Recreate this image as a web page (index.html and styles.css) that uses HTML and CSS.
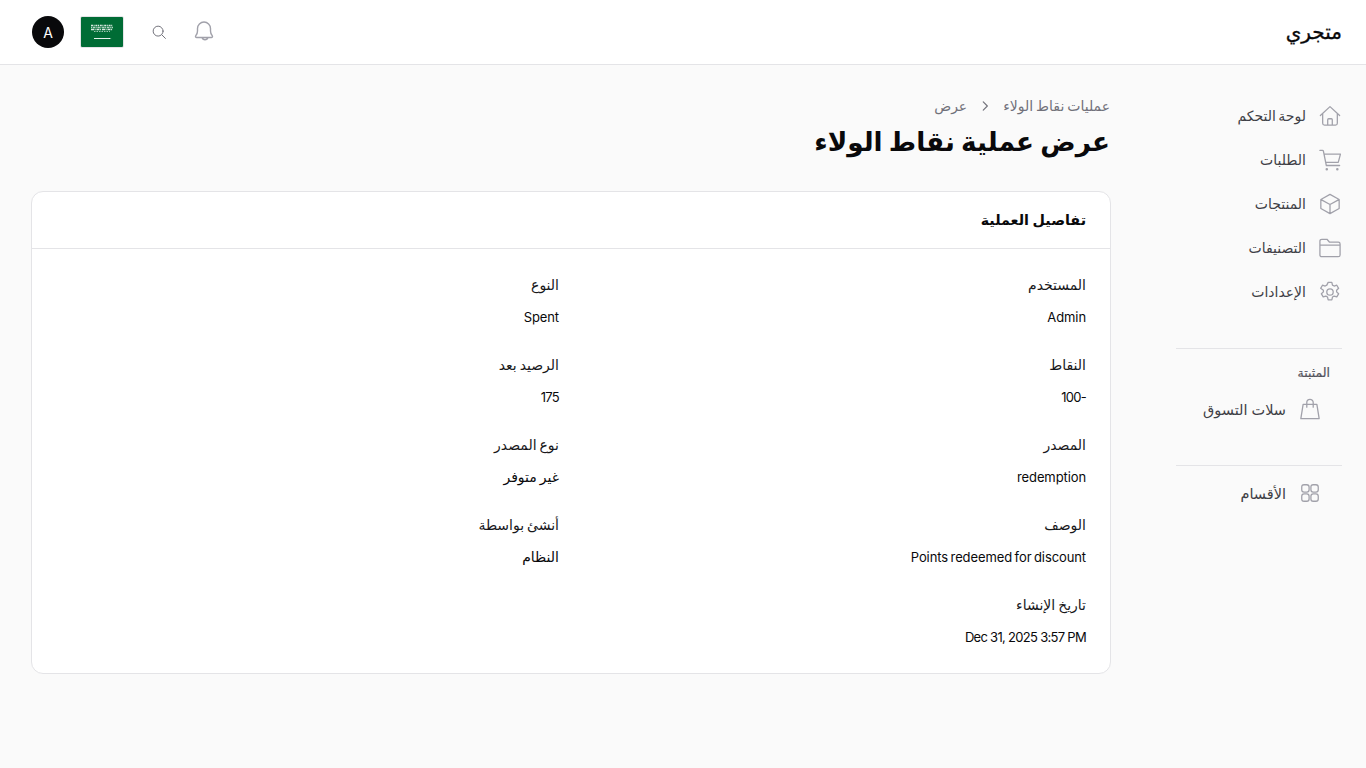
FILE: index.html
```html
<!DOCTYPE html>
<html lang="ar" dir="rtl">
<head>
    <meta charset="UTF-8">
    <title>عرض عملية نقاط الولاء</title>
    <link rel="stylesheet" href="styles.css">
</head>
<body>
    <header class="topbar">
        <div class="logo">متجري</div>
        <div class="top-actions">
            <svg class="bell" viewBox="0 0 24 24" fill="none" stroke="currentColor" stroke-width="1.4" stroke-linecap="round" stroke-linejoin="round"><path d="M14.900 17.500a3 3 0 0 1-5.800 0M5.600 17.500h12.800c.9 0 1.400-1 .9-1.700-.8-1-1.800-2.100-1.800-4.800V8.500a6.500 6.500 0 0 0-13 0V11c0 2.700-1 3.800-1.800 4.800-.5.7 0 1.700.9 1.700z"/></svg>
            <svg class="search" viewBox="0 0 24 24" fill="none" stroke="currentColor" stroke-width="1.700" stroke-linecap="round"><circle cx="10.500" cy="10.500" r="8.500"/><path d="M17 17l6 6"/></svg>
            <div class="flag">
                <svg viewBox="0 0 42 30" width="42" height="30"><rect width="42" height="30" fill="#006c35"/><path d="M10 8.500h22" stroke="#fff" stroke-width="1.300" stroke-dasharray="2 .6 1 .8" opacity=".85"/><path d="M10 10.500h22" stroke="#fff" stroke-width="1.300" stroke-dasharray="1 .7 2.500 .5" opacity=".7"/><path d="M10 12.500h22" stroke="#fff" stroke-width="1.300" stroke-dasharray="3 .6 1 .9" opacity=".85"/><path d="M13 14.500h16" stroke="#fff" stroke-width="1" stroke-dasharray="1.500 1" opacity=".6"/><path d="M13 21.500h16" stroke="#fff" stroke-width=".9"/><path d="M28 20.900l2.500.6-2.500.6z" fill="#fff"/></svg>
            </div>
            <div class="avatar">A</div>
        </div>
    </header>
    <div class="layout">
        <aside class="sidebar">
            <nav class="nav">
                <a class="nav-item">
                    <svg viewBox="0 0 24 24"><path d="M1.500 11.500L12 1.800l10.500 9.700M4 9.500V20a2 2 0 0 0 2 2h12a2 2 0 0 0 2-2V9.500M9.500 22v-6a1 1 0 0 1 1-1h3a1 1 0 0 1 1 1v6"/></svg>
                    <span>لوحة التحكم</span>
                </a>
                <a class="nav-item">
                    <svg viewBox="0 0 24 24"><path d="M1 1.500h2.800c.5 0 .9.300 1 .8L8 18h14.500M5.400 5.500h18l-2.400 9H7.300"/><circle cx="8.500" cy="22" r=".7"/><circle cx="20" cy="22" r=".7"/></svg>
                    <span>الطلبات</span>
                </a>
                <a class="nav-item">
                    <svg viewBox="0 0 24 24"><path d="M12 1.500l10 5.600v9.800l-10 5.600-10-5.600V7.100zM2.300 7.200L12 12.500l9.700-5.300M12 12.500v9.800"/></svg>
                    <span>المنتجات</span>
                </a>
                <a class="nav-item">
                    <svg viewBox="0 0 24 24"><path d="M1 7V4.500a2 2 0 0 1 2-2h5.700l2.800 3.200H21a2 2 0 0 1 2 2V19.500a2 2 0 0 1-2 2H3a2 2 0 0 1-2-2zM1 8.800h22"/></svg>
                    <span>التصنيفات</span>
                </a>
                <a class="nav-item">
                    <svg viewBox="0 0 24 24"><circle cx="12" cy="12" r="3.500"/><path d="M10 1.500h4l.7 3 1.800 1 2.900-.9 2 3.400-2.200 2.100v1.800l2.200 2.100-2 3.400-2.900-.9-1.800 1-.7 3h-4l-.7-3-1.800-1-2.900.9-2-3.400 2.200-2.100V10.100L1.800 8l2-3.400 2.900.9 1.800-1z"/></svg>
                    <span>الإعدادات</span>
                </a>
            </nav>
            <div class="side-group">
                <div class="side-title">المثبتة</div>
                <a class="nav-item sub-item">
                    <svg viewBox="0 0 24 24"><path d="M4.500 7h15L22 22.500H2zM8.500 10V5a3.500 3.500 0 0 1 7 0v5"/></svg>
                    <span>سلات التسوق</span>
                </a>
            </div>
            <div class="side-group last">
                <a class="nav-item sub-item">
                    <svg viewBox="0 0 24 24"><rect x="3" y="3" width="8" height="8" rx="2.500"/><rect x="13" y="3" width="8" height="8" rx="2.500"/><rect x="3" y="13" width="8" height="8" rx="2.500"/><rect x="13" y="13" width="8" height="8" rx="2.500"/></svg>
                    <span>الأقسام</span>
                </a>
            </div>
        </aside>
        <main class="content">
            <div class="breadcrumb">
                <span>عمليات نقاط الولاء</span>
                <svg viewBox="0 0 24 24" fill="none" stroke="currentColor" stroke-width="2" stroke-linecap="round" stroke-linejoin="round"><path d="M9 5l7 7-7 7"/></svg>
                <span>عرض</span>
            </div>
            <h1>عرض عملية نقاط الولاء</h1>
            <section class="card">
                <h2 class="card-head">تفاصيل العملية</h2>
                <div class="details">
                    <div class="field"><div class="label">المستخدم</div><div class="value">Admin</div></div>
                    <div class="field"><div class="label">النوع</div><div class="value">Spent</div></div>
                    <div class="field"><div class="label">النقاط</div><div class="value num">-100</div></div>
                    <div class="field"><div class="label">الرصيد بعد</div><div class="value num">175</div></div>
                    <div class="field"><div class="label">المصدر</div><div class="value">redemption</div></div>
                    <div class="field"><div class="label">نوع المصدر</div><div class="value value-ar">غير متوفر</div></div>
                    <div class="field"><div class="label">الوصف</div><div class="value">Points redeemed for discount</div></div>
                    <div class="field"><div class="label">أنشئ بواسطة</div><div class="value value-ar">النظام</div></div>
                    <div class="field"><div class="label">تاريخ الإنشاء</div><div class="value num">Dec 31, 2025 3:57 PM</div></div>
                </div>
            </section>
        </main>
    </div>
</body>
</html>
```

FILE: styles.css
```css
* {
    box-sizing: border-box;
}

body {
    margin: 0;
    background-color: #fafafa;
    color: #09090b;
    font-family: "Inter", "Noto Sans", "DejaVu Sans", sans-serif;
    font-size: 14px;
    height: 768px;
    overflow: hidden;
}

.topbar {
    height: 65px;
    background-color: #fff;
    border-bottom: 1px solid #e4e4e7;
    display: flex;
    align-items: center;
    justify-content: space-between;
    padding: 0 24px 0 32px;
}

.logo {
    font-size: 20px;
    font-weight: 500;
    -webkit-text-stroke: 0.300px #09090b;
}

.top-actions {
    display: flex;
    align-items: center;
    color: #a1a1aa;
}

.bell {
    width: 24px;
    height: 24px;
}

.search {
    width: 14px;
    height: 14px;
    margin-right: 27px;
    color: #71717a;
}

.flag {
    width: 44px;
    height: 32px;
    margin-right: 28px;
    border: 1px solid #e4e4e7;
    border-radius: 2px;
    overflow: hidden;
}

.flag svg {
    display: block;
}

.avatar {
    width: 32px;
    height: 32px;
    margin-right: 16px;
    border-radius: 50%;
    background-color: #09090b;
    color: #fff;
    display: flex;
    align-items: center;
    justify-content: center;
}

.layout {
    display: flex;
}

.sidebar {
    width: 190px;
    padding: 28px 25px 0 0;
    flex-shrink: 0;
}

.nav {
    display: flex;
    flex-direction: column;
    word-spacing: -1.500px;
}

.nav-item {
    display: flex;
    align-items: center;
    gap: 13px;
    height: 44px;
    color: #3f3f46;
}

.nav-item svg {
    width: 22px;
    height: 22px;
    margin-top: 2px;
    fill: none;
    stroke: #a1a1aa;
    stroke-width: 1.400;
    stroke-linecap: round;
    stroke-linejoin: round;
    flex-shrink: 0;
}

.side-group {
    margin-top: 35px;
    margin-right: -1px;
    padding-top: 16px;
    border-top: 1px solid #e4e4e7;
}

.side-group.last {
    margin-top: 34px;
    padding-top: 5px;
}

.side-title {
    font-size: 12.500px;
    font-weight: 500;
    -webkit-text-stroke: 0.200px #52525b;
    color: #52525b;
    margin-right: 12px;
    margin-bottom: 6px;
    line-height: 16px;
}

.sub-item {
    margin-right: 21px;
    font-size: 14.500px;
}

.nav-item.sub-item svg {
    margin-top: 0;
}

.content {
    width: 1080px;
    padding-top: 29px;
    margin-right: 65px;
}

.breadcrumb {
    display: flex;
    align-items: center;
    gap: 11px;
    margin-right: 1px;
    color: #71717a;
    line-height: 24px;
    word-spacing: -1px;
}

.breadcrumb svg {
    width: 14px;
    height: 14px;
}

h1 {
    margin: 6px 1px 31px 0;
    font-size: 26.300px;
    font-weight: 700;
    line-height: 36px;
}

.card {
    background-color: #fff;
    border: 1px solid #e4e4e7;
    border-radius: 12px;
}

.card-head {
    margin: 0;
    height: 57px;
    padding: 0 24px 2px;
    border-bottom: 1px solid #e4e4e7;
    font-size: 14.300px;
    font-weight: 600;
    display: flex;
    align-items: center;
}

.details {
    display: grid;
    grid-template-columns: 1fr 1fr;
    gap: 24px;
    padding: 24px;
}

.field {
    display: flex;
    flex-direction: column;
    gap: 8px;
}

.label,
.value {
    line-height: 24px;
}

.label {
    color: #18181b;
    word-spacing: -1px;
}

.value {
    font-size: 13px;
    letter-spacing: -0.100px;
    word-spacing: -1px;
}

.num {
    letter-spacing: -0.700px;
    word-spacing: 0;
}

.value-ar {
    font-size: 14px;
    letter-spacing: 0;
}
```
